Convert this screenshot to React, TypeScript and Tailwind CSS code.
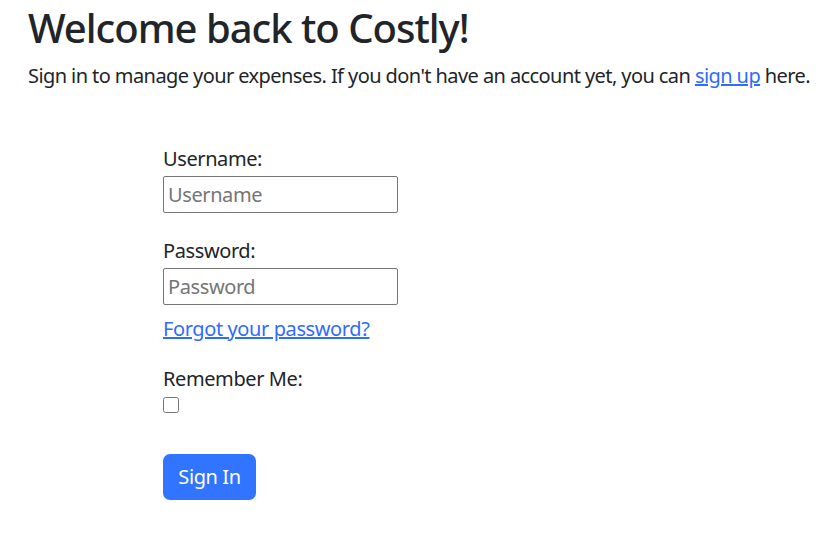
export default function App() {
  return (
    <div className="min-h-[538px] bg-white px-[28px] pt-[4px] font-['Noto_Sans',sans-serif] text-[20px] leading-[30px] tracking-[-0.02em] text-[#212529]">
      <h1 className="text-[40px] leading-[48px] font-medium tracking-[-0.025em]">Welcome back to Costly!</h1>
      <p className="mt-[9px] whitespace-nowrap tracking-[-0.029em]">
        Sign in to manage your expenses. If you don't have an account yet, you can{' '}
        <a href="#" className="text-[#2f6bff] underline">
          sign up
        </a>{' '}
        here.
      </p>

      <form className="ml-[135px] mt-[53px] flex w-[235px] flex-col" onSubmit={(e) => e.preventDefault()}>
        <label htmlFor="username">Username:</label>
        <input
          id="username"
          type="text"
          placeholder="Username"
          className="mt-[2px] h-[37px] w-[235px] rounded-[2px] border border-[#767676] px-[4px] text-[20px] placeholder:text-[#757575]"
        />

        <label htmlFor="password" className="mt-[23px]">
          Password:
        </label>
        <input
          id="password"
          type="password"
          placeholder="Password"
          className="mt-[2px] h-[37px] w-[235px] rounded-[2px] border border-[#767676] px-[4px] text-[20px] placeholder:text-[#757575]"
        />
        <a href="#" className="mt-[9px] self-start text-[#2f6bff] underline">
          Forgot your password?
        </a>

        <label htmlFor="remember" className="mt-[20px]">
          Remember Me:
        </label>
        <input
          id="remember"
          type="checkbox"
          className="mt-[3px] h-[16px] w-[16px] self-start rounded-[3px]"
        />

        <button
          type="submit"
          className="mt-[41px] h-[46px] w-[93px] rounded-[7px] bg-[#3174ff] text-[20px] text-white"
        >
          Sign In
        </button>
      </form>
    </div>
  )
}
